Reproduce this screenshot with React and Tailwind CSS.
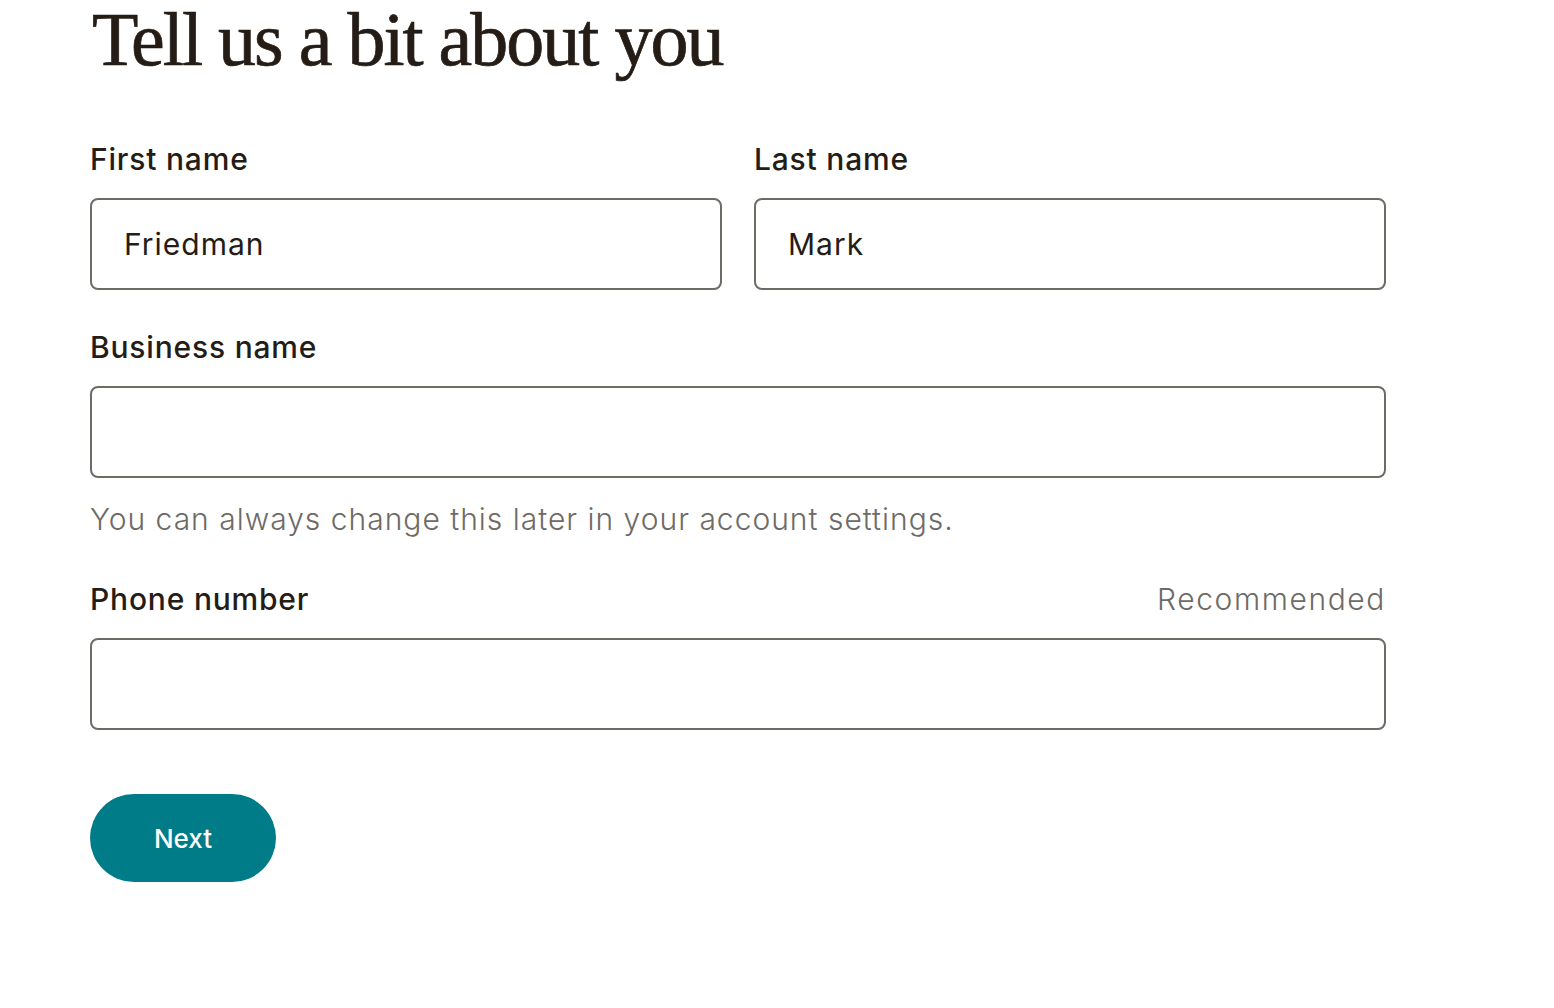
import React, { useState } from 'react';

const body = { fontFamily: 'Inter, "Liberation Sans", sans-serif' };

function Field({ label, value, onChange, aside, className = '' }) {
  return (
    <div className={className}>
      <div className="flex items-center justify-between h-[40px] mb-[19px]">
        <label className="text-[30px] leading-[40px] font-medium tracking-[0.8px] text-[#241c15]">{label}</label>
        {aside && <span className="text-[30px] leading-[40px] font-light tracking-[1.6px] text-[#6e6a66]">{aside}</span>}
      </div>
      <input
        className="w-full h-[92px] rounded-[8px] border-2 border-[#6e6a66] bg-white px-[32px] text-[30px] tracking-[1px] text-[#241c15] outline-none"
        value={value}
        onChange={(e) => onChange(e.target.value)}
      />
    </div>
  );
}

export default function App() {
  const [first, setFirst] = useState('Friedman');
  const [last, setLast] = useState('Mark');
  const [biz, setBiz] = useState('');
  const [phone, setPhone] = useState('');

  return (
    <div className="min-h-screen bg-white pl-[90px]" style={body}>
      <div className="w-[1296px]">
        <h1
          className="pl-[2px] text-[76px] leading-[76px] tracking-[-2px] text-[#241c15] [-webkit-text-stroke:0.7px_#241c15] mt-[1px] mb-[62px]"
          style={{ fontFamily: '"Liberation Serif", serif' }}
        >
          Tell us a bit about you
        </h1>

        <div className="grid grid-cols-2 gap-[32px]">
          <Field label="First name" value={first} onChange={setFirst} />
          <Field label="Last name" value={last} onChange={setLast} />
        </div>

        <Field label="Business name" value={biz} onChange={setBiz} className="mt-[37px]" />
        <p className="mt-[21px] text-[30px] leading-[40px] font-light tracking-[1px] text-[#6e6a66]">
          You can always change this later in your account settings.
        </p>

        <Field label="Phone number" aside="Recommended" value={phone} onChange={setPhone} className="mt-[40px]" />

        <button className="mt-[64px] w-[186px] h-[88px] rounded-full bg-[#007c89] text-white text-[26px] font-medium">
          Next
        </button>
      </div>
    </div>
  );
}
